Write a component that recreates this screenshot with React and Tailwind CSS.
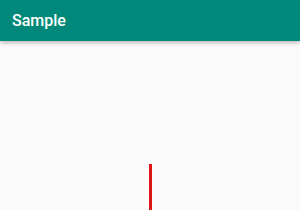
export default function App() {
  return (
    <div className="w-[300px] h-[210px] bg-[#fafafa] flex flex-col overflow-hidden" style={{ fontFamily: 'Roboto, "Noto Sans", sans-serif' }}>
      <div className="h-[41px] shrink-0 bg-[#00897b] flex items-center px-3 pt-px shadow-[0_2px_4px_rgba(0,0,0,0.25)] z-10">
        <span className="text-white text-[16px] font-medium">Sample</span>
      </div>
      <div className="flex-1 flex pl-[149px] pt-[123px]">
        <div className="w-[3px] h-full bg-[#e01414]" />
      </div>
    </div>
  );
}
